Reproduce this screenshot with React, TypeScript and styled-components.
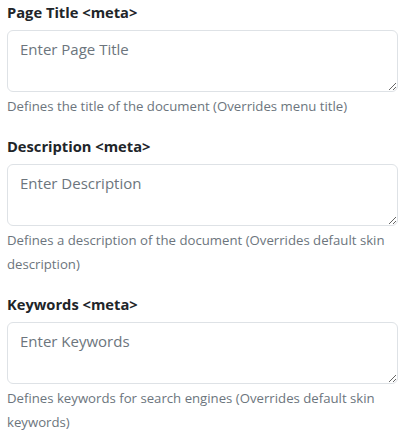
import styled, { createGlobalStyle } from "styled-components";

const GlobalStyle = createGlobalStyle`
    body {
        margin: 0;
        background: #fff;
        font-family: "Open Sans", "Liberation Sans", sans-serif;
        color: #212529;
    }
`;

const Form = styled.form`
    display: flex;
    flex-direction: column;
    gap: 16px;
    padding: 0 7px;
`;

const Field = styled.div`
    display: flex;
    flex-direction: column;
`;

const Label = styled.label`
    font-size: 14.7px;
    font-weight: 700;
    line-height: 24px;
    margin-bottom: 6px;
    color: #212529;
`;

const TextArea = styled.textarea`
    box-sizing: border-box;
    width: 100%;
    height: 62px;
    padding: 6px 12px;
    font-family: inherit;
    font-size: 15px;
    line-height: 24px;
    color: #212529;
    border: 1px solid #dee2e6;
    border-radius: 6px;
    background: #fff;
    outline: none;
    display: block;

    &::placeholder {
        color: #6c757d;
        opacity: 1;
    }
`;

const Help = styled.div`
    margin-top: 2px;
    font-size: 13.2px;
    line-height: 24px;
    color: #6c757d;
`;

interface FieldData {
    id: string;
    label: string;
    placeholder: string;
    help: string;
}

const fields: FieldData[] = [
    {
        id: "title",
        label: "Page Title",
        placeholder: "Enter Page Title",
        help: "Defines the title of the document (Overrides menu title)",
    },
    {
        id: "description",
        label: "Description",
        placeholder: "Enter Description",
        help: "Defines a description of the document (Overrides default skin description)",
    },
    {
        id: "keywords",
        label: "Keywords",
        placeholder: "Enter Keywords",
        help: "Defines keywords for search engines (Overrides default skin keywords)",
    },
];

const App = () => {
    return (
        <>
            <GlobalStyle />
            <Form>
                {fields.map((f) => (
                    <Field key={f.id}>
                        <Label htmlFor={f.id}>{f.label} &lt;meta&gt;</Label>
                        <TextArea id={f.id} placeholder={f.placeholder} />
                        <Help>{f.help}</Help>
                    </Field>
                ))}
            </Form>
        </>
    );
};

export default App;
